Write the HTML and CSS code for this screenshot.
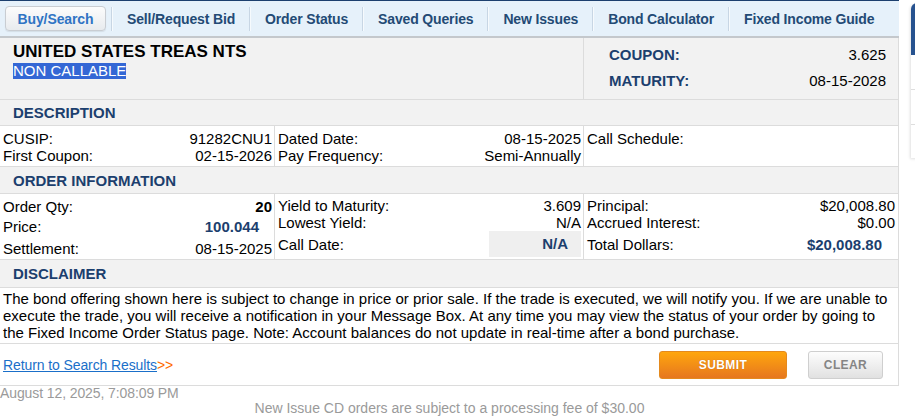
FILE: index.html
```html
<!DOCTYPE html>
<html>
<head>
<meta charset="utf-8">
<link rel="stylesheet" href="styles.css">
</head>
<body>
<div class="page">
  <nav class="nav">
    <a class="nav-btn">Buy/Search</a>
    <span class="nav-sep"></span>
    <a class="nav-item">Sell/Request Bid</a>
    <span class="nav-sep"></span>
    <a class="nav-item">Order Status</a>
    <span class="nav-sep"></span>
    <a class="nav-item">Saved Queries</a>
    <span class="nav-sep"></span>
    <a class="nav-item">New Issues</a>
    <span class="nav-sep"></span>
    <a class="nav-item">Bond Calculator</a>
    <span class="nav-sep"></span>
    <a class="nav-item">Fixed Income Guide</a>
  </nav>

  <div class="sheet">
    <div class="head">
      <div class="head-left">
        <div class="title">UNITED STATES TREAS NTS</div>
        <span class="sel">NON CALLABLE</span>
      </div>
      <div class="head-right">
        <div class="kv"><span class="hk">COUPON:</span><span>3.625</span></div>
        <div class="kv"><span class="hk">MATURITY:</span><span>08-15-2028</span></div>
      </div>
    </div>

    <div class="sec sec-desc">DESCRIPTION</div>
    <div class="row row-desc">
      <div class="cell c1">
        <div class="kv"><span>CUSIP:</span><span>91282CNU1</span></div>
        <div class="kv"><span>First Coupon:</span><span>02-15-2026</span></div>
      </div>
      <div class="cell c2">
        <div class="kv"><span>Dated Date:</span><span>08-15-2025</span></div>
        <div class="kv"><span>Pay Frequency:</span><span>Semi-Annually</span></div>
      </div>
      <div class="cell c3">
        <div class="kv"><span>Call Schedule:</span><span></span></div>
      </div>
    </div>

    <div class="sec sec-order">ORDER INFORMATION</div>
    <div class="row row-order">
      <div class="cell c1 ocol1">
        <div class="kv h20"><span>Order Qty:</span><span class="bold">20</span></div>
        <div class="kv h22"><span>Price:</span><span class="bold navy pad-r">100.044</span></div>
        <div class="kv h17"><span>Settlement:</span><span>08-15-2025</span></div>
      </div>
      <div class="cell c2 ocol">
        <div class="kv h17"><span>Yield to Maturity:</span><span>3.609</span></div>
        <div class="kv h17"><span>Lowest Yield:</span><span>N/A</span></div>
        <div class="kv h26"><span>Call Date:</span><span class="na-box">N/A</span></div>
      </div>
      <div class="cell c3 ocol">
        <div class="kv h17"><span>Principal:</span><span>$20,008.80</span></div>
        <div class="kv h17"><span>Accrued Interest:</span><span>$0.00</span></div>
        <div class="kv h26"><span>Total Dollars:</span><span class="bold navy pad-r">$20,008.80</span></div>
      </div>
    </div>

    <div class="sec sec-disc">DISCLAIMER</div>
    <div class="disc">The bond offering shown here is subject to change in price or prior sale. If the trade is executed, we will notify you. If we are unable to execute the trade, you will receive a notification in your Message Box. At any time you may view the status of your order by going to the Fixed Income Order Status page. Note: Account balances do not update in real-time after a bond purchase.</div>

    <div class="actions">
      <div class="ret"><a class="ret-link" href="#">Return to Search Results</a><span class="arrows">&gt;&gt;</span></div>
      <div class="btns">
        <button class="btn-submit">SUBMIT</button>
        <button class="btn-clear">CLEAR</button>
      </div>
    </div>
  </div>

  <div class="stamp">August 12, 2025, 7:08:09 PM</div>
  <div class="notice">New Issue CD orders are subject to a processing fee of $30.00</div>
</div>

<div class="side-panel">
  <div class="sp-top"></div>
  <div class="sp-row"></div>
  <div class="sp-row"></div>
</div>
</body>
</html>
```

FILE: styles.css
```css
html, body {
  margin: 0;
  padding: 0;
  overflow: hidden;
  background: #fff;
}
body {
  font-family: "Liberation Sans", Arial, sans-serif;
  font-size: 15px;
  color: #000;
}
.page {
  width: 899px;
}

/* nav */
.nav {
  display: flex;
  align-items: center;
  height: 35px;
  border-top: 1px solid #1c3f6e;
  border-bottom: 2px solid #c4c8cc;
  background: #e6f1fa;
  padding-left: 5px;
  white-space: nowrap;
  overflow: hidden;
}
.nav-btn {
  flex: none;
  width: 101px;
  height: 25px;
  box-sizing: border-box;
  display: flex;
  align-items: center;
  justify-content: center;
  border: 1px solid #c9cdd2;
  border-radius: 4px;
  background: linear-gradient(#fcfcfc, #e8ebee);
  box-shadow: 0 1px 1px rgba(0,0,0,0.08);
  color: #2f74c4;
  font-weight: bold;
  font-size: 14px;
  letter-spacing: -0.1px;
  margin-right: 5px;
}
.nav-sep {
  flex: none;
  width: 1px;
  height: 24px;
  background: #c8d6e4;
  box-shadow: 1px 0 0 #f6fafd;
}
.nav-item {
  flex: none;
  padding: 0 14px 0 15px;
  color: #234a75;
  font-weight: bold;
  font-size: 14px;
  letter-spacing: -0.15px;
}

/* sheet */
.sheet {
  border-right: 1px solid #dcdcdc;
  border-bottom: 1px solid #dcdcdc;
}
.head {
  display: flex;
  height: 61px;
  background: #f2f2f2;
  border-bottom: 1px solid #dcdcdc;
}
.head-left {
  width: 584px;
  box-sizing: border-box;
  border-right: 1px solid #dcdcdc;
  padding: 4px 13px 0;
}
.title {
  font-size: 17px;
  font-weight: bold;
  line-height: 20px;
}
.sel {
  display: inline-block;
  margin-top: 1px;
  background: #3467d5;
  color: #fff;
  line-height: 16px;
}
.head-right {
  flex: 1;
  padding: 8px 12px 0 25px;
  display: flex;
  flex-direction: column;
  gap: 9px;
}
.hk {
  font-weight: bold;
  color: #1c3f6e;
}

.kv {
  display: flex;
  justify-content: space-between;
  line-height: 17px;
}

.sec {
  display: flex;
  align-items: center;
  background: #f2f2f2;
  border-bottom: 1px solid #dcdcdc;
  padding-left: 13px;
  font-weight: bold;
  color: #1c3f6e;
}
.sec-desc { height: 25px; }
.sec-order { height: 26px; }
.sec-disc { height: 27px; }

.row {
  display: flex;
  border-bottom: 1px solid #dcdcdc;
}
.row-desc { height: 40px; }
.row-order { height: 65px; }
.cell {
  box-sizing: border-box;
  padding: 4px 2px 0 3px;
}
.c1 {
  width: 275px;
  border-right: 1px solid #dcdcdc;
}
.c2 {
  width: 309px;
  border-right: 1px solid #dcdcdc;
}
.c3 {
  flex: 1;
  padding-right: 3px;
}
.ocol { padding-top: 3px; }
.h17 { height: 17px; align-items: flex-start; }
.h20 { height: 20px; align-items: flex-start; }
.h22 { height: 22px; align-items: flex-start; }
.h26 { height: 26px; align-items: center; }
.bold { font-weight: bold; }
.navy { color: #1c3f6e; }
.pad-r { padding-right: 13px; }
.na-box {
  width: 92px;
  height: 26px;
  box-sizing: border-box;
  background: #efefef;
  text-align: right;
  padding-right: 13px;
  line-height: 26px;
  font-weight: bold;
  color: #1c3f6e;
}

.disc {
  height: 56px;
  box-sizing: border-box;
  padding: 2px 3px 0;
  line-height: 17px;
  border-bottom: 1px solid #dcdcdc;
}

.actions {
  height: 41px;
  display: flex;
  align-items: center;
  justify-content: space-between;
  padding: 0 15px 0 3px;
}
.ret {
  font-size: 14px;
  line-height: 16px;
  letter-spacing: -0.1px;
}
.ret-link {
  color: #1a6fc9;
  text-decoration: underline;
}
.arrows {
  color: #ff6a00;
}
.btns {
  display: flex;
  gap: 21px;
  padding-top: 1px;
}
.btn-submit, .btn-clear {
  height: 28px;
  border-radius: 3px;
  font-family: "Liberation Sans", Arial, sans-serif;
  font-weight: bold;
  font-size: 12px;
  letter-spacing: 0.4px;
  padding: 0;
  cursor: pointer;
}
.btn-submit {
  width: 128px;
  border: 1px solid #e48a1e;
  background: linear-gradient(#ffa60d, #e6771f);
  color: #fff;
  text-shadow: 0 0 1px rgba(120,50,0,0.4);
}
.btn-clear {
  width: 75px;
  border: 1px solid #cfcfcf;
  background: linear-gradient(#fdfdfd, #e1e1e1);
  color: #858585;
}

.stamp {
  font-size: 14px;
  line-height: 15px;
  color: #9a9a9a;
  letter-spacing: -0.1px;
}
.notice {
  font-size: 14px;
  line-height: 15px;
  color: #9a9a9a;
  text-align: center;
}

/* partially visible side panel */
.side-panel {
  position: absolute;
  left: 911px;
  top: 3px;
  width: 300px;
  height: 155px;
  background: #fff;
  border-radius: 6px 0 0 0;
  box-shadow: -1px 1px 3px rgba(0,0,0,0.12);
  overflow: hidden;
}
.sp-top {
  height: 52px;
  background: #27528f;
}
.sp-row {
  height: 34px;
  border-bottom: 1px solid #dedede;
}
```
